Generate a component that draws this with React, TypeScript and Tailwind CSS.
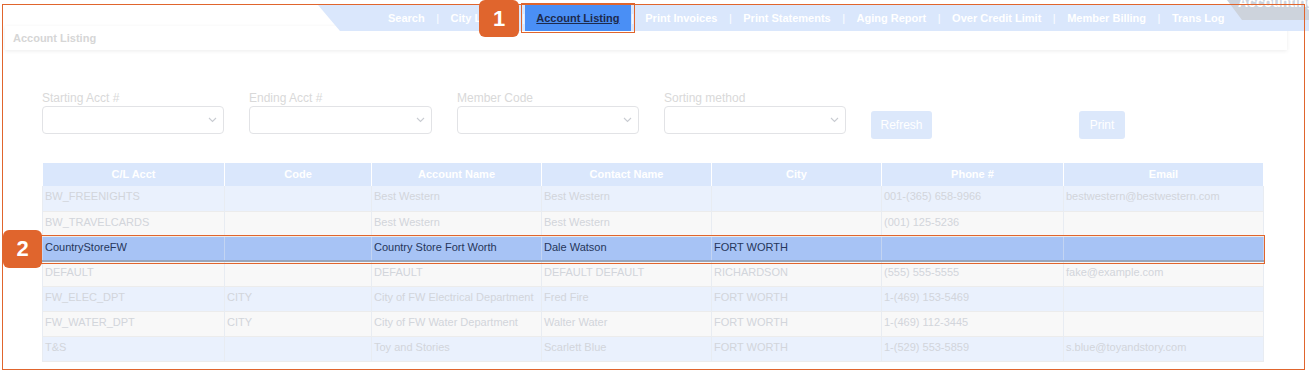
import React from 'react'

const NAV = ['Search', 'City Listing', 'Account Listing', 'Print Invoices', 'Print Statements', 'Aging Report', 'Over Credit Limit', 'Member Billing', 'Trans Log']

const FILTERS = [
  { label: 'Starting Acct #', w: 'w-[182px]' },
  { label: 'Ending Acct #', w: 'w-[183px]' },
  { label: 'Member Code', w: 'w-[182px]' },
  { label: 'Sorting method', w: 'w-[182px]' },
]

const COLS = [
  { name: 'C/L Acct', w: 'w-[182px]' },
  { name: 'Code', w: 'w-[147px]' },
  { name: 'Account Name', w: 'w-[170px]' },
  { name: 'Contact Name', w: 'w-[170px]' },
  { name: 'City', w: 'w-[170px]' },
  { name: 'Phone #', w: 'w-[182px]' },
  { name: 'Email', w: 'w-[200px]' },
]

const ROWS = [
  ['BW_FREENIGHTS', '', 'Best Western', 'Best Western', '', '001-(365) 658-9966', 'bestwestern@bestwestern.com'],
  ['BW_TRAVELCARDS', '', 'Best Western', 'Best Western', '', '(001) 125-5236', ''],
  ['CountryStoreFW', '', 'Country Store Fort Worth', 'Dale Watson', 'FORT WORTH', '', ''],
  ['DEFAULT', '', 'DEFAULT', 'DEFAULT DEFAULT', 'RICHARDSON', '(555) 555-5555', 'fake@example.com'],
  ['FW_ELEC_DPT', 'CITY', 'City of FW Electrical Department', 'Fred Fire', 'FORT WORTH', '1-(469) 153-5469', ''],
  ['FW_WATER_DPT', 'CITY', 'City of FW Water Department', 'Walter Water', 'FORT WORTH', '1-(469) 112-3445', ''],
  ['T&S', '', 'Toy and Stories', 'Scarlett Blue', 'FORT WORTH', '1-(529) 553-5859', 's.blue@toyandstory.com'],
]

const SELECTED = 2

function Chevron() {
  return (
    <svg width="9" height="6" viewBox="0 0 9 6" className="shrink-0">
      <path d="M1 1l3.5 3.5L8 1" fill="none" stroke="#c9ccd2" strokeWidth="1.1" />
    </svg>
  )
}

function Badge({ n, className }: { n: string; className: string }) {
  return (
    <div
      className={`absolute z-30 flex items-center justify-center rounded-[6px] bg-[#e0652d] text-[22px] font-bold leading-none text-white ${className}`}
    >
      {n}
    </div>
  )
}

export default function App() {
  return (
    <div className="relative h-[374px] w-[1309px] overflow-hidden bg-white font-['Liberation_Sans',Arial,sans-serif]">
      {/* top nav */}
      <div className="relative z-10 h-[30px] pt-[5px]">
        <div className="ml-[318px] flex h-[26px] items-center bg-[#dae7fc] pl-[70px] text-[11px] font-bold text-white [clip-path:polygon(0_0,100%_0,100%_100%,22px_100%)]">
          {NAV.map((item, i) => (
            <div key={item} className="flex items-center">
              {i > 0 && <span className="px-[11.5px] font-normal text-white/90">|</span>}
              {item === 'Account Listing' ? (
                <span className="-mx-[11.5px] flex h-[26px] items-center bg-[#4a8ff5] px-[11.5px] text-[#1d2a4c] underline">
                  {item}
                </span>
              ) : (
                <span className="whitespace-nowrap">{item}</span>
              )}
            </div>
          ))}
        </div>
        {/* grey module tab */}
        <div className="absolute right-0 top-0 h-[20px] w-[82px] overflow-hidden bg-[#cdd3dc] pl-[11px] text-[14px] font-bold leading-[14px] text-white [clip-path:polygon(0_0,100%_0,100%_100%,15px_100%)]">
          <span className="relative -top-[5px] whitespace-nowrap">Accounting</span>
        </div>
      </div>

      {/* page title card */}
      <div className="ml-[5px] -mt-[4px] h-[24px] w-[1282px] bg-white px-[8px] pt-[6px] text-[11px] font-bold leading-[13px] text-[#d6d6d6] shadow-[0_1px_4px_rgba(0,0,0,0.08)]">
        Account Listing
      </div>

      {/* filters */}
      <div className="ml-[42px] mt-[41px] flex items-start">
        {FILTERS.map((f) => (
          <div key={f.label} className={`mr-[25px] flex flex-col ${f.w}`}>
            <span className="h-[15px] text-[12px] leading-[14px] text-[#d9d9d9]">{f.label}</span>
            <div className="flex h-[28px] items-center justify-end rounded-[4px] border border-[#e2e3e6] pr-[6px]">
              <Chevron />
            </div>
          </div>
        ))}
        <div className="mt-[20px] flex h-[28px] w-[61px] items-center justify-center rounded-[3px] bg-[#dce8fb] text-[12px] text-white">
          Refresh
        </div>
        <div className="ml-[147px] mt-[20px] flex h-[28px] w-[46px] items-center justify-center rounded-[3px] bg-[#dce8fb] text-[12px] text-white">
          Print
        </div>
      </div>

      {/* table */}
      <div className="relative ml-[42px] mt-[24px] w-[1221px]">
        <table className="w-[1221px] table-fixed border-collapse text-[11px]">
          <thead>
            <tr className="h-[23px] bg-[#dae7fc]">
              {COLS.map((c) => (
                <th key={c.name} className={`${c.w} border-x border-white text-center font-bold text-white`}>
                  {c.name}
                </th>
              ))}
            </tr>
          </thead>
          <tbody>
            {ROWS.map((r, i) => {
              const sel = i === SELECTED
              const bg = sel ? 'bg-[#a7c3f5]' : i % 2 === 0 ? 'bg-[#eaf1fd]' : 'bg-[#f8f8f8]'
              return (
                <tr
                  key={r[0]}
                  className={`h-[25px] ${bg} ${sel ? 'border-b-2 border-t border-b-[#98a6bd] border-t-[#b9c3d3]' : 'border-b border-[#ececec]'}`}
                >
                  {r.map((cell, j) => (
                    <td
                      key={j}
                      className={`overflow-hidden whitespace-nowrap pl-[2px] pt-[3px] align-top leading-[14px] ${
                        sel ? 'border-x border-[#c3d4f2] text-[#26365a]' : 'border-x border-[#e8ecf2] text-[#d2d5db]'
                      }`}
                    >
                      {cell}
                    </td>
                  ))}
                </tr>
              )
            })}
          </tbody>
        </table>
        {/* highlight on selected row */}
        <div className="pointer-events-none absolute -left-[1px] top-[72px] h-[29px] w-[1224px] border border-[#e0652d]" />
      </div>

      {/* annotation frame */}
      <div className="pointer-events-none absolute left-[2px] top-[4px] z-20 h-[366px] w-[1303px] border border-[#e0652d]" />
      <div className="pointer-events-none absolute left-[521px] top-[3px] z-20 h-[30px] w-[114px] border border-[#e0652d]" />
      <Badge n="1" className="left-[479px] top-0 h-[37px] w-[40px]" />
      <Badge n="2" className="left-[3px] top-[230px] h-[38px] w-[39px]" />
    </div>
  )
}
